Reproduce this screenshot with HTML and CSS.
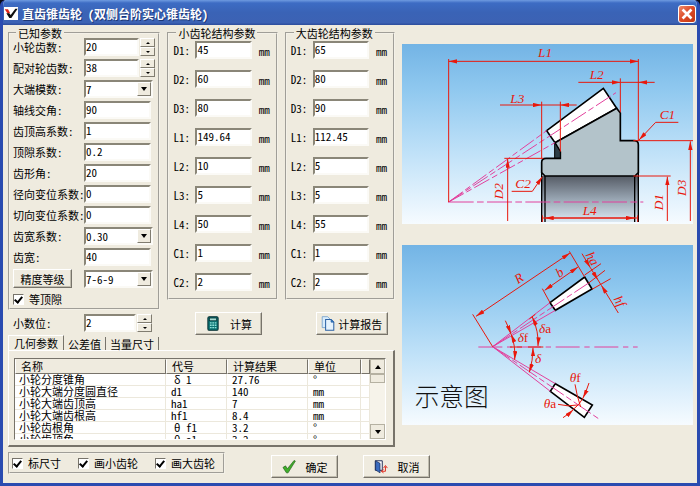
FILE: index.html
```html
<!DOCTYPE html>
<html lang="zh-CN">
<head>
<meta charset="utf-8">
<title>直齿锥齿轮(双侧台阶实心锥齿轮)</title>
<link rel="stylesheet" href="styles.css">
</head>
<body>
<div class="window">
  <header class="titlebar">
    <svg class="logo" viewBox="0 0 42 39" aria-hidden="true"><rect width="42" height="39" fill="#fff"/><path d="M2 7h10l6 10-6 4z" fill="#e02418"/><path d="M7 19h9l4 5L34 5h7L22 33h-6z" fill="#111"/></svg>
    <h1>直齿锥齿轮 (双侧台阶实心锥齿轮)</h1>
    <button class="close" aria-label="关闭"><svg viewBox="0 0 18 18"><path d="M4 4l10 10M14 4L4 14" stroke="#fff" stroke-width="3"/></svg></button>
  </header>

  <main class="client">
    <div class="left">
      <div class="groups">
        <div class="group-col">
          <fieldset class="known">
            <legend>已知参数</legend>
            <div class="row"><label for="k1">小轮齿数:</label><span class="spin"><input id="k1" value="20"><span class="steps"><button aria-label="增加"></button><button aria-label="减少"></button></span></span></div>
            <div class="row"><label for="k2">配对轮齿数:</label><span class="spin"><input id="k2" value="38"><span class="steps"><button aria-label="增加"></button><button aria-label="减少"></button></span></span></div>
            <div class="row"><label for="k3">大端模数:</label><span class="combo"><select id="k3"><option>7</option></select><span class="drop"></span></span></div>
            <div class="row"><label for="k4">轴线交角:</label><input id="k4" value="90"></div>
            <div class="row"><label for="k5">齿顶高系数:</label><input id="k5" value="1"></div>
            <div class="row"><label for="k6">顶隙系数:</label><input id="k6" value="0.2"></div>
            <div class="row"><label for="k7">齿形角:</label><input id="k7" value="20"></div>
            <div class="row"><label for="k8">径向变位系数:</label><input id="k8" value="0"></div>
            <div class="row"><label for="k9">切向变位系数:</label><input id="k9" value="0"></div>
            <div class="row"><label for="k10">齿宽系数:</label><span class="combo"><select id="k10"><option>0.30</option></select><span class="drop"></span></span></div>
            <div class="row"><label for="k11">齿宽:</label><input id="k11" value="40"></div>
            <div class="row"><button class="btn grade">精度等级</button><span class="combo"><select aria-label="精度等级"><option>7-6-9</option></select><span class="drop"></span></span></div>
            <label class="check"><input type="checkbox" checked>等顶隙</label>
          </fieldset>
          <div class="row digits"><label for="dg">小数位:</label><span class="spin"><input id="dg" value="2"><span class="steps"><button aria-label="增加"></button><button aria-label="减少"></button></span></span></div>
        </div>

        <div class="group-col">
          <fieldset class="dims">
            <legend>小齿轮结构参数</legend>
            <div class="dim"><label for="a1">D1:</label><input id="a1" value="45"><span class="unit">mm</span></div>
            <div class="dim"><label for="a2">D2:</label><input id="a2" value="60"><span class="unit">mm</span></div>
            <div class="dim"><label for="a3">D3:</label><input id="a3" value="80"><span class="unit">mm</span></div>
            <div class="dim"><label for="a4">L1:</label><input id="a4" value="149.64"><span class="unit">mm</span></div>
            <div class="dim"><label for="a5">L2:</label><input id="a5" value="10"><span class="unit">mm</span></div>
            <div class="dim"><label for="a6">L3:</label><input id="a6" value="5"><span class="unit">mm</span></div>
            <div class="dim"><label for="a7">L4:</label><input id="a7" value="50"><span class="unit">mm</span></div>
            <div class="dim"><label for="a8">C1:</label><input id="a8" value="1"><span class="unit">mm</span></div>
            <div class="dim"><label for="a9">C2:</label><input id="a9" value="2"><span class="unit">mm</span></div>
          </fieldset>
          <button class="btn calc"><svg class="icon" viewBox="0 0 34 44" aria-hidden="true"><rect x="2" y="2" width="30" height="40" rx="4" fill="#0d7474" stroke="#032c30" stroke-width="3"/><rect x="7" y="6" width="20" height="8" fill="#a8dcd4" stroke="#032c30" stroke-width="2"/><path d="M8 20h5m2 0h5m2 0h5M8 27h5m2 0h5m2 0h5M8 34h5m2 0h5m2 0h5" stroke="#8fe0d8" stroke-width="4"/></svg>计算</button>
        </div>

        <div class="group-col">
          <fieldset class="dims">
            <legend>大齿轮结构参数</legend>
            <div class="dim"><label for="b1">D1:</label><input id="b1" value="65"><span class="unit">mm</span></div>
            <div class="dim"><label for="b2">D2:</label><input id="b2" value="80"><span class="unit">mm</span></div>
            <div class="dim"><label for="b3">D3:</label><input id="b3" value="90"><span class="unit">mm</span></div>
            <div class="dim"><label for="b4">L1:</label><input id="b4" value="112.45"><span class="unit">mm</span></div>
            <div class="dim"><label for="b5">L2:</label><input id="b5" value="5"><span class="unit">mm</span></div>
            <div class="dim"><label for="b6">L3:</label><input id="b6" value="5"><span class="unit">mm</span></div>
            <div class="dim"><label for="b7">L4:</label><input id="b7" value="55"><span class="unit">mm</span></div>
            <div class="dim"><label for="b8">C1:</label><input id="b8" value="1"><span class="unit">mm</span></div>
            <div class="dim"><label for="b9">C2:</label><input id="b9" value="2"><span class="unit">mm</span></div>
          </fieldset>
          <button class="btn report"><svg class="icon" viewBox="0 0 38 44" aria-hidden="true"><path d="M2 2h16l8 8v24H2z" fill="#d9ecfb" stroke="#5b8fc4" stroke-width="2"/><path d="M12 10h16l8 8v24H12z" fill="#e6f3fd" stroke="#2c62a4" stroke-width="3"/><path d="M28 10v8h8z" fill="#2c7cc8" stroke="#2c62a4" stroke-width="2"/></svg>计算报告</button>
        </div>
      </div>

      <section class="results">
        <div class="tabs" role="tablist">
          <button role="tab" class="tab active" aria-selected="true">几何参数</button>
          <button role="tab" class="tab">公差值</button>
          <button role="tab" class="tab">当量尺寸</button>
        </div>
        <div class="panel">
          <div class="list">
            <div class="scroller">
              <table>
                <colgroup><col class="c-name"><col class="c-code"><col class="c-val"><col class="c-unit"><col></colgroup>
                <thead><tr><th>名称</th><th>代号</th><th>计算结果</th><th>单位</th><th></th></tr></thead>
                <tbody>
                  <tr><td>小轮分度锥角</td><td class="greek">δ 1</td><td>27.76</td><td>°</td><td></td></tr>
                  <tr><td>小轮大端分度圆直径</td><td>d1</td><td>140</td><td>mm</td><td></td></tr>
                  <tr><td>小轮大端齿顶高</td><td>ha1</td><td>7</td><td>mm</td><td></td></tr>
                  <tr><td>小轮大端齿根高</td><td>hf1</td><td>8.4</td><td>mm</td><td></td></tr>
                  <tr><td>小轮齿根角</td><td class="greek">θ f1</td><td>3.2</td><td>°</td><td></td></tr>
                  <tr><td>小轮齿顶角</td><td class="greek">θ a1</td><td>3.2</td><td>°</td><td></td></tr>
                </tbody>
              </table>
            </div>
            <div class="scrollbar">
              <button class="up" aria-label="向上滚动"></button>
              <span class="thumb"></span>
              <button class="down" aria-label="向下滚动"></button>
            </div>
          </div>
        </div>
      </section>
    </div>

    <div class="right">
      <svg class="figure" viewBox="6 12 873 540" role="img" aria-label="锥齿轮剖面尺寸图">
        <defs>
          <linearGradient id="sky" x1="0" y1="0" x2="0" y2="1"><stop offset="0" stop-color="#73b4e5"/><stop offset=".25" stop-color="#8fc8ef"/><stop offset=".6" stop-color="#bfe1f8"/><stop offset="1" stop-color="#f6fbff"/></linearGradient>
          <linearGradient id="bore" x1="0" y1="0" x2="0" y2="1"><stop offset="0" stop-color="#565c66"/><stop offset=".5" stop-color="#98a5b2"/><stop offset="1" stop-color="#dce9f3"/></linearGradient>
          <marker id="ar" viewBox="0 0 20 10" refX="20" refY="5" markerWidth="26" markerHeight="13" markerUnits="userSpaceOnUse" orient="auto-start-reverse"><path d="M0 0L20 5L0 10z" fill="#e8180c"/></marker>
        </defs>
        <rect x="6" y="12" width="873" height="540" fill="url(#sky)"/>
        <rect x="425" y="408" width="290" height="138" fill="url(#bore)"/>
        <path d="M440 272L610 145L650 205L465 308z" fill="#fff" stroke="#000" stroke-width="5"/>
        <path d="M465 308L650 205L661 219V302H703Q715 302 715 314V398L705 408H435L425 398V367Q425 355 438 355H481V335z" fill="#b3c3ca" stroke="#000" stroke-width="5"/>
        <path d="M464 308L481 335V354H464z" fill="#2c3d46" stroke="#000" stroke-width="3"/>
        <path d="M425 398V546M435 408V546M704 408V546M715 398V546" stroke="#000" stroke-width="4"/>
        <g class="axis">
          <path d="M146 486L440 272M146 486L648 158M146 486L465 308" stroke-dasharray="52 9 18 9"/>
          <path d="M146 486H730" stroke-dasharray="75 10 20 10"/>
        </g>
        <g class="dimline">
          <path d="M146 57V486M715 57V302M661 115V217M425 185V355M481 185V335M313 355H430M700 302H879M700 408H812"/>
          <path d="M146 64H715" marker-start="url(#ar)" marker-end="url(#ar)"/>
          <path d="M535 127H661" marker-end="url(#ar)"/><path d="M764 127H715" marker-end="url(#ar)"/><path d="M661 127H715"/>
          <path d="M300 195H425" marker-end="url(#ar)"/><path d="M530 195H481" marker-end="url(#ar)"/><path d="M425 195H481"/>
          <path d="M323 543V357" marker-end="url(#ar)"/>
          <path d="M871 543V304" marker-end="url(#ar)"/>
          <path d="M802 543V410" marker-end="url(#ar)"/>
          <path d="M427 534H713M427 526V546M713 526V546"/><path d="M435 534H704" marker-start="url(#ar)" marker-end="url(#ar)"/>
          <path d="M335 454H397L427 410" marker-end="url(#ar)"/>
          <path d="M835 247H767L717 300" marker-end="url(#ar)"/>
        </g>
        <g class="dimtext">
          <text x="414" y="52">L1</text><text x="569" y="117">L2</text><text x="331" y="188">L3</text>
          <text x="548" y="526">L4</text><text x="346" y="444">C2</text><text x="779" y="237">C1</text>
          <text transform="translate(308 478) rotate(-90)">D2</text>
          <text transform="translate(789 511) rotate(-90)">D1</text>
          <text transform="translate(857 468) rotate(-90)">D3</text>
        </g>
      </svg>

      <svg class="figure" viewBox="6 14 873 540" role="img" aria-label="锥齿轮角度示意图">
        <rect x="6" y="14" width="873" height="540" fill="url(#sky)"/>
        <path d="M450 187L554 110L576 146L466 210zM466 430L577 494L553 531L451 453z" fill="#fff" stroke="#000" stroke-width="5"/>
        <g class="axis">
          <path d="M278 319L450 187M278 319L466 210M278 319L451 453M278 319L466 430"/>
          <path d="M278 319L566 128M278 319L600 538" stroke-dasharray="62 9 18 9"/>
          <path d="M235 320H713" stroke-dasharray="72 14 16 14"/>
        </g>
        <g class="dimline">
          <path d="M218 222L278 319M508 33L554 110M427 145L450 187M554 104L603 70M566 128L615 90M576 147L632 115M388 236L406 222M330 320H366M384 320H430"/>
          <path d="M228 228L510 38" marker-start="url(#ar)" marker-end="url(#ar)"/>
          <path d="M434 150L534 80" marker-start="url(#ar)" marker-end="url(#ar)"/>
          <path d="M546 40L571 82" marker-end="url(#ar)"/><path d="M571 82L594 119" marker-end="url(#ar)"/><path d="M594 119L604 135"/><path d="M655 218L604 135" marker-end="url(#ar)"/>
          <path d="M316 241Q324 257 333 281" marker-end="url(#ar)"/><path d="M333 281Q347 315 344 358" marker-start="url(#ar)" marker-end="url(#ar)"/>
          <path d="M397 230Q417 275 414 317" marker-start="url(#ar)" marker-end="url(#ar)"/>
          <path d="M399 322Q399 360 388 396" marker-start="url(#ar)" marker-end="url(#ar)"/>
          <path d="M525 432Q530 465 542 500M474 492Q505 500 532 494"/>
          <path d="M567 428Q560 450 549 473" marker-end="url(#ar)"/><path d="M549 473Q540 492 518 509"/><path d="M489 532Q505 522 520 508" marker-end="url(#ar)"/>
        </g>
        <g class="dimtext">
          <text transform="translate(354 132) rotate(-34)">R</text>
          <text transform="translate(478 113) rotate(-34)">b</text>
          <text transform="translate(556 44) rotate(60)">ha</text>
          <text transform="translate(640 176) rotate(60)">hf</text>
          <text x="353" y="306">δ<tspan class="up">f</tspan></text><text x="417" y="278">δ<tspan class="up">a</tspan></text><text x="405" y="367">δ</text>
          <text x="509" y="425">θ<tspan class="up">f</tspan></text><text x="431" y="502">θ<tspan class="up">a</tspan></text>
        </g>
        <text class="caption" x="44" y="496">示意图</text>
      </svg>
    </div>
  </main>

  <footer class="footer">
    <div class="options">
      <label class="check"><input type="checkbox" checked>标尺寸</label>
      <label class="check"><input type="checkbox" checked>画小齿轮</label>
      <label class="check"><input type="checkbox" checked>画大齿轮</label>
    </div>
    <div class="actions">
      <button class="btn"><svg class="icon" viewBox="0 0 44 44" aria-hidden="true"><path d="M3 25l8-5 6 9L38 3l4 2L19 42h-5z" fill="#3fae2a" stroke="#1c5c14" stroke-width="2"/></svg>确定</button>
      <button class="btn"><svg class="icon" viewBox="0 0 44 44" aria-hidden="true"><path d="M4 4h22v30H4z" fill="#fff" stroke="#1b2a55" stroke-width="3"/><path d="M5 4l14 8v30L5 33z" fill="#3b6cc0" stroke="#10204a" stroke-width="2"/><path d="M24 37h12V22M30 27l6-8 6 8M30 31l-7 6 7 5" fill="none" stroke="#e02a1c" stroke-width="3"/></svg>取消</button>
    </div>
  </footer>
</div>
</body>
</html>
```
FILE: styles.css
```css
* { box-sizing: border-box; }

body {
  margin: 0;
  background: #0a0a14;
  color: #000;
  font: 11px/14px "Noto Sans Mono CJK SC", "Liberation Sans", "Noto Sans CJK SC", sans-serif;
}

button, input, select { font: inherit; color: inherit; margin: 0; border-radius: 0; }

.window {
  display: flex;
  flex-direction: column;
  min-height: 100vh;
  border: solid #2a4bb0;
  border-width: 0 3px 3px;
  border-radius: 6px 6px 0 0;
  background: #efebdf;
  overflow: hidden;
}

.titlebar {
  display: flex;
  align-items: center;
  gap: 4px;
  height: 25px;
  margin: 0 -3px;
  padding: 2px 4px 0;
  background: linear-gradient(#6f9be0, #3d6cc4 12%, #3a63b6 50%, #3c62b4 90%, #2c4c9c);
}
.logo { width: 14px; height: 13px; }
.titlebar h1 { flex: 1; margin: 0; font-size: 12px; line-height: 16px; font-weight: 700; color: #fff; text-shadow: 1px 1px #1c3674; }
.close {
  width: 18px; height: 18px; padding: 0;
  border: 1px solid #fff; border-radius: 3px;
  background: linear-gradient(135deg, #ee8a6c, #dc4a26 50%, #c23812);
}
.close svg { display: block; width: 16px; height: 16px; }

.client {
  display: grid;
  grid-template-columns: minmax(0, 387fr) minmax(0, 291fr);
  gap: 7px;
  padding: 3px 4px 0 5px;
}

.groups { display: grid; grid-template-columns: 152fr 110fr 110fr; gap: 7px; }
.group-col { display: flex; flex-direction: column; align-items: stretch; min-width: 0; }

fieldset { min-width: 0; margin: 0; border: 2px groove #f4f1e8; }
legend { margin-left: 3px; padding: 0 2px; line-height: 10px; }

input:not([type]), select {
  width: 100%;
  min-width: 0;
  height: 18px;
  padding: 0 0 2px;
  border: 2px solid;
  border-color: #8a8678 #fbfaf6 #fbfaf6 #8a8678;
  background: #fff;
  outline: 0;
}

.known { padding: 0 3px; display: flex; flex-direction: column; gap: 3px; }
.row { display: grid; grid-template-columns: 71px minmax(0, 1fr); align-items: center; height: 18px; padding-right: 4px; white-space: nowrap; }

.spin { display: grid; grid-template-columns: minmax(0, 1fr) 15px; gap: 1px; margin-right: -4px; }
.steps { display: grid; grid-template-rows: 9px 9px; }
.steps button, .drop, .scrollbar button {
  display: grid;
  place-items: center;
  padding: 0;
  border: 1px solid;
  border-color: #fff #807c70 #807c70 #fff;
  background: #efebdf;
}
.steps button::before { content: ""; border: solid transparent; border-width: 0 2px 2px; border-bottom-color: #000; }
.steps button:last-child::before { border-width: 2px 2px 0; border-top-color: #000; }

.combo { display: grid; margin-right: -2px; }
.combo select { grid-area: 1 / 1; appearance: none; padding: 0; line-height: 14px; }
.drop { grid-area: 1 / 1; justify-self: end; align-self: center; width: 14px; height: 14px; margin-right: 2px; pointer-events: none; }
.drop::before, .down::before, .up::before { content: ""; border: solid transparent; border-width: 4px 3px 0; border-top-color: #000; }
.up::before { border-width: 0 3px 4px; border-bottom-color: #000; }

.btn {
  display: flex;
  align-items: center;
  justify-content: center;
  gap: 10px;
  height: 23px;
  padding: 0;
  white-space: nowrap;
  border: 1px solid;
  border-color: #fff #77736a #77736a #fff;
  box-shadow: inset -1px -1px #c0bcae;
  background: #efebdf;
}
.icon { width: 14px; height: 15px; }
.grade { width: 59px; height: 19px; }

.check { display: flex; align-items: center; gap: 5px; line-height: 18px; white-space: nowrap; }
.check input {
  appearance: none;
  display: grid;
  place-items: center;
  width: 11px; height: 11px;
  border: 1px solid;
  border-color: #77736a #fff #fff #77736a;
  background: #fff;
}
.check input:checked::before { content: ""; width: 3px; height: 6px; border: solid #000; border-width: 0 2px 2px 0; transform: rotate(40deg); }

.digits { margin: 4px 4px 0 5px; }
.digits .spin { margin: 0; }

.dims { display: grid; gap: 11px; padding: 3px 5px 7px 4px; }
.dim { display: grid; grid-template-columns: 22px minmax(0, 1fr) 12px; align-items: center; }
.dim input { width: auto; margin-right: 7px; }
.unit { align-self: end; line-height: 16px; font-weight: 500; }

.calc, .report { margin-top: 12px; }
.calc { width: 67px; margin-left: 28px; }
.report { width: 72px; margin-left: 31px; gap: 3px; }

.tabs { display: flex; align-items: flex-end; height: 15px; }
.tab { height: 13px; padding: 0 4px; line-height: 12px; border: solid #77736a; border-width: 0 1px 0 0; background: none; white-space: nowrap; }
.tab.active { height: 15px; padding: 0 5px; border-left: 1px solid #fff; border-top: 1px solid #fff; }

.panel { padding: 7px 7px 5px 5px; border: solid; border-width: 1px 2px 2px 1px; border-color: #fff #77736a #77736a #fff; }
.list { display: grid; grid-template-columns: minmax(0, 1fr) 15px; height: 82px; border: 1px solid; border-color: #77736a #fff #fff #77736a; background: #fff; }
.scroller { overflow: hidden; }
table { width: 100%; table-layout: fixed; border-collapse: separate; border-spacing: 0; }
.c-name { width: 151px; }
.c-code { width: 61px; }
.c-val { width: 81px; }
.c-unit { width: 53px; }
th, td { padding: 0 5px; text-align: left; white-space: nowrap; font-weight: 400; }
th { height: 15px; line-height: 13px; background: #efebdf; border: 1px solid; border-color: #efebdf #77736a #77736a #fff; }
td { height: 12px; line-height: 11px; border: solid #ece8dc; border-width: 0 1px 1px 0; }
td:first-child { padding-left: 4px; }
td.greek { padding-left: 8px; }

.scrollbar { display: flex; flex-direction: column; background: #f6f3ea; }
.scrollbar button { height: 15px; border-color: #b5b1a2; }
.thumb { flex: 0 0 9px; border: 1px solid #b5b1a2; background: #efebdf; }
.scrollbar .down { margin-top: auto; }

.right { display: flex; flex-direction: column; gap: 21px; padding-top: 16px; }
.figure { display: block; width: 100%; height: auto; }
.axis { fill: none; stroke: #e2409c; stroke-width: 3; }
.dimline { fill: none; stroke: #e8180c; stroke-width: 3; }
.dimtext { fill: #e8180c; font: italic 40px "Liberation Serif", serif; }
.dimtext .up { font-style: normal; }
.caption { font: 300 74px "Noto Sans CJK SC", sans-serif; fill: #111; }

.footer { display: flex; align-items: flex-start; gap: 46px; padding: 5px 5px 0; }
.options { display: flex; gap: 17px; padding: 0 8px 0 2px; border: 2px groove #f4f1e8; }
.actions { display: flex; gap: 25px; padding-top: 3px; }
.actions .btn { width: 67px; }
```
